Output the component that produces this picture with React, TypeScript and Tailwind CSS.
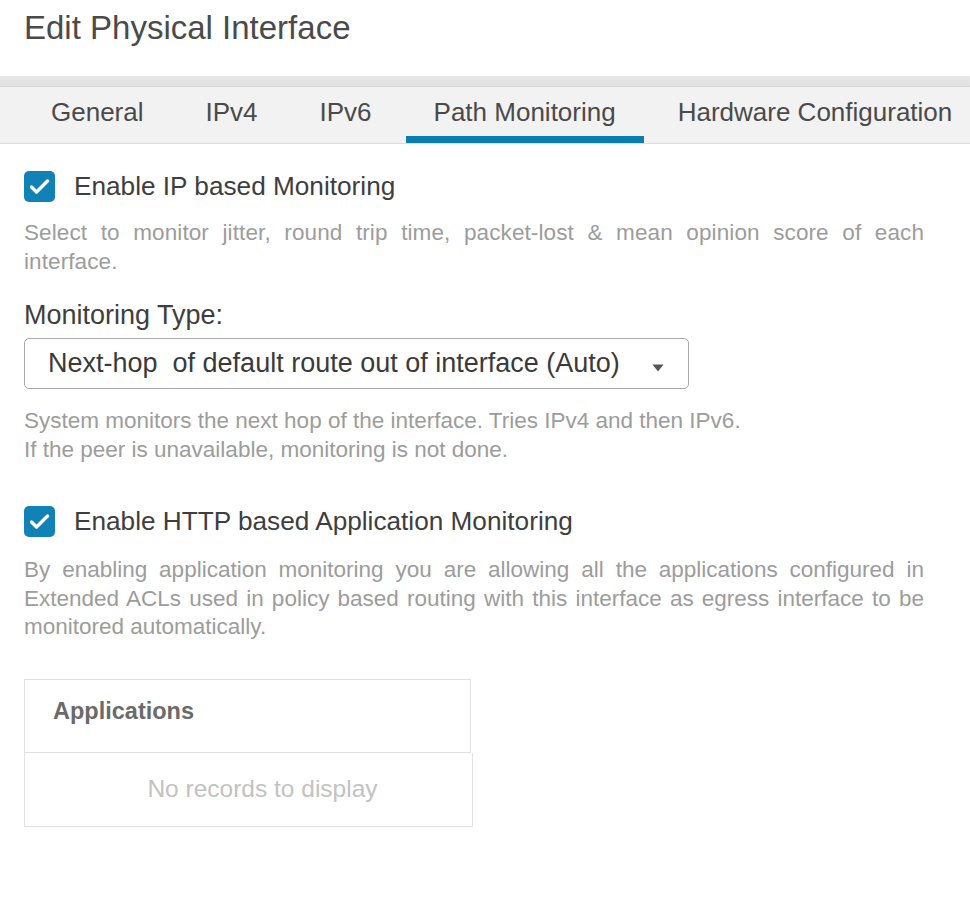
const tabs = ["General", "IPv4", "IPv6", "Path Monitoring", "Hardware Configuration"];

function CheckBox() {
  return (
    <span className="flex h-[31px] w-[31px] shrink-0 items-center justify-center rounded-[5px] bg-[#1082b5]">
      <svg width="21" height="17" viewBox="0 0 21 17" fill="none">
        <path
          d="M2.5 9l5 5L18.5 3"
          stroke="#fff"
          strokeWidth="3.4"
          strokeLinecap="round"
          strokeLinejoin="round"
        />
      </svg>
    </span>
  );
}

function Toggle({ label }: { label: string }) {
  return (
    <label className="flex items-center gap-[19px]">
      <CheckBox />
      <span className="text-[26.2px] leading-[31px] text-[#3e3e3e]">{label}</span>
    </label>
  );
}

function Hint({ children, className = "" }: { children: React.ReactNode; className?: string }) {
  return (
    <p className={`text-[22.5px] leading-[28.5px] text-[#9c9c9c] text-justify ${className}`}>
      {children}
    </p>
  );
}

export default function App() {
  return (
    <div className="h-[910px] w-[970px] overflow-hidden bg-white font-['Liberation_Sans',Arial,sans-serif]">
      <h1 className="h-[76px] pl-6 pt-[8px] text-[33px] leading-[40px] text-[#4a4a4a]">
        Edit Physical Interface
      </h1>

      <div className="h-[11px] border-b border-[#d8d8d8] bg-gradient-to-b from-[#e8e8e8] to-[#e0e0e0]" />

      <nav className="flex h-[57px] gap-[6px] border-b border-[#dedede] bg-[#f2f2f2] pl-[23px]">
        {tabs.map((t) => (
          <div
            key={t}
            className={`flex items-center whitespace-nowrap px-7 pt-[1px] text-[26px] text-[#4a4a4a] border-b-[7px] ${
              t === "Path Monitoring" ? "border-[#0a7eb0]" : "border-transparent"
            }`}
          >
            {t}
          </div>
        ))}
      </nav>

      <div className="px-6 pr-[46px]">
        <div className="mt-[27px]">
          <Toggle label="Enable IP based Monitoring" />
        </div>
        <Hint className="mt-[17px] tracking-[0.1px]">
          Select to monitor jitter, round trip time, packet-lost &amp; mean opinion score of each
          interface.
        </Hint>

        <div className="mt-[24px] text-[27px] leading-[30px] text-[#3e3e3e]">Monitoring Type:</div>
        <div className="mt-[8px] flex h-[51px] w-[665px] items-center justify-between rounded-[5px] border border-[#a9a9a9] pl-[23px] pr-[24px]">
          <span className="whitespace-pre text-[27px] text-[#3a3a3a]">
            {"Next-hop  of default route out of interface (Auto)"}
          </span>
          <svg width="12" height="8" viewBox="0 0 12 8" className="mt-[8px]">
            <path d="M0.5 0.5h11L6 7.5z" fill="#555" />
          </svg>
        </div>

        <Hint className="mt-[17px] leading-[29px] text-left">
          System monitors the next hop of the interface. Tries IPv4 and then IPv6.
          <br />
          If the peer is unavailable, monitoring is not done.
        </Hint>

        <div className="mt-[42px]">
          <Toggle label="Enable HTTP based Application Monitoring" />
        </div>
        <Hint className="mt-[19px]">
          By enabling application monitoring you are allowing all the applications configured in
          Extended ACLs used in policy based routing with this interface as egress interface to be
          monitored automatically.
        </Hint>

        <div className="mt-[37px] w-[449px]">
          <div className="flex h-[74px] w-[447px] items-center border border-[#e1e1e1] pl-[28px] pb-[8px] text-[23.5px] font-bold text-[#6a6a6a]">
            Applications
          </div>
          <div className="flex h-[74px] w-[449px] items-center justify-center border border-t-0 border-[#e1e1e1] pl-[28px] text-[24.5px] text-[#c2c2c2]">
            No records to display
          </div>
        </div>
      </div>
    </div>
  );
}
